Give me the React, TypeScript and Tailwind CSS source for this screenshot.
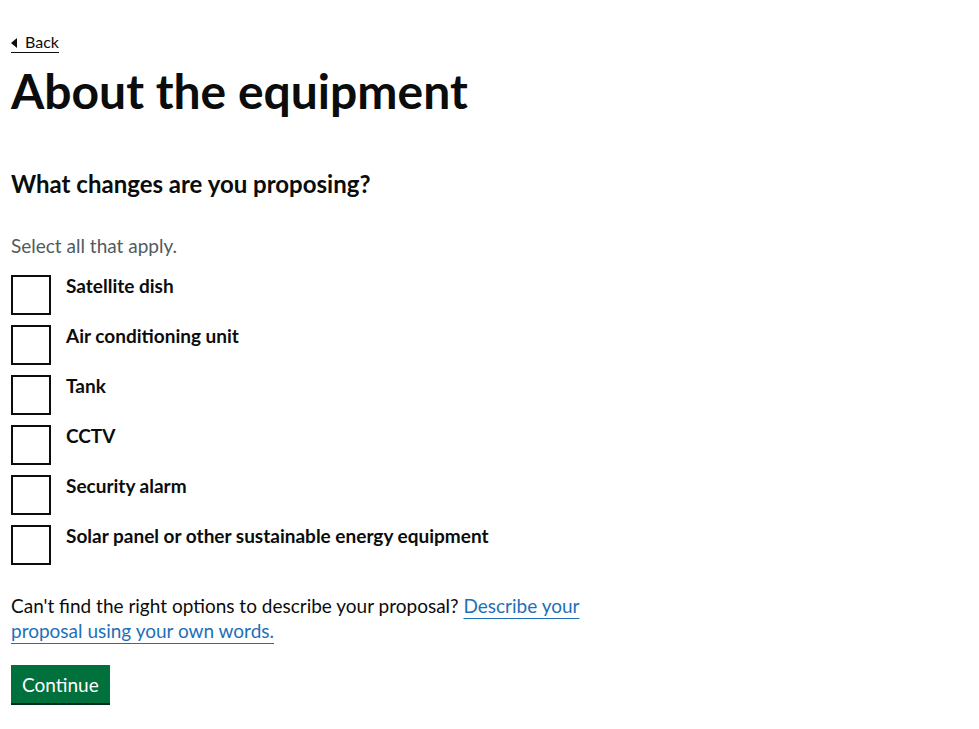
import { useState } from 'react';

const options = [
  'Satellite dish',
  'Air conditioning unit',
  'Tank',
  'CCTV',
  'Security alarm',
  'Solar panel or other sustainable energy equipment',
];

export default function App() {
  const [checked, setChecked] = useState<string[]>([]);

  const toggle = (item: string) => {
    setChecked((prev) =>
      prev.includes(item) ? prev.filter((i) => i !== item) : [...prev, item]
    );
  };

  return (
    <div
      className="min-h-screen bg-white px-[11px] text-[#0b0c0c]"
      style={{ fontFamily: 'Lato, "Noto Sans", sans-serif' }}
    >
      {/* Back link */}
      <div className="pt-[30px]">
        <a
          href="#"
          className="relative inline-block border-b border-[#0b0c0c] pl-[14px] text-[16px] leading-[20px] text-[#0b0c0c]"
        >
          <span className="absolute left-0 top-[6px] h-0 w-0 border-y-[5px] border-r-[6px] border-y-transparent border-r-[#0b0c0c]" />
          Back
        </a>
      </div>

      <h1 className="mt-[12px] text-[48px] font-bold leading-[50px]">
        About the equipment
      </h1>

      <fieldset className="mt-[53px]">
        <legend className="text-[24px] font-bold leading-[30px]">
          What changes are you proposing?
        </legend>
        <div className="mt-[34px] text-[19px] leading-[25px] text-[#505a5f]">
          Select all that apply.
        </div>

        <div className="mt-[17px] flex flex-col gap-[10px]">
          {options.map((item) => (
            <label key={item} className="flex cursor-pointer items-start">
              <span
                onClick={() => toggle(item)}
                className="flex h-[40px] w-[40px] shrink-0 items-center justify-center border-2 border-[#0b0c0c] bg-white"
              >
                {checked.includes(item) && (
                  <span className="mb-[6px] h-[11px] w-[22px] -rotate-45 border-b-[5px] border-l-[5px] border-[#0b0c0c]" />
                )}
              </span>
              <span className="-mt-[2px] pl-[15px] text-[19px] font-bold leading-[25px]">
                {item}
              </span>
            </label>
          ))}
        </div>
      </fieldset>

      <p className="mt-[28px] max-w-[590px] text-[19px] leading-[25px]">
        Can't find the right options to describe your proposal?{' '}
        <a
          href="#"
          className="text-[#1d70b8] underline decoration-1 underline-offset-[5px]"
        >
          Describe your proposal using your own words.
        </a>
      </p>

      <button
        type="button"
        className="mt-[22px] bg-[#00703c] px-[11px] pb-[7px] pt-[8px] text-[19px] leading-[23px] text-white shadow-[0_2px_0_#002d18]"
      >
        Continue
      </button>
    </div>
  );
}
